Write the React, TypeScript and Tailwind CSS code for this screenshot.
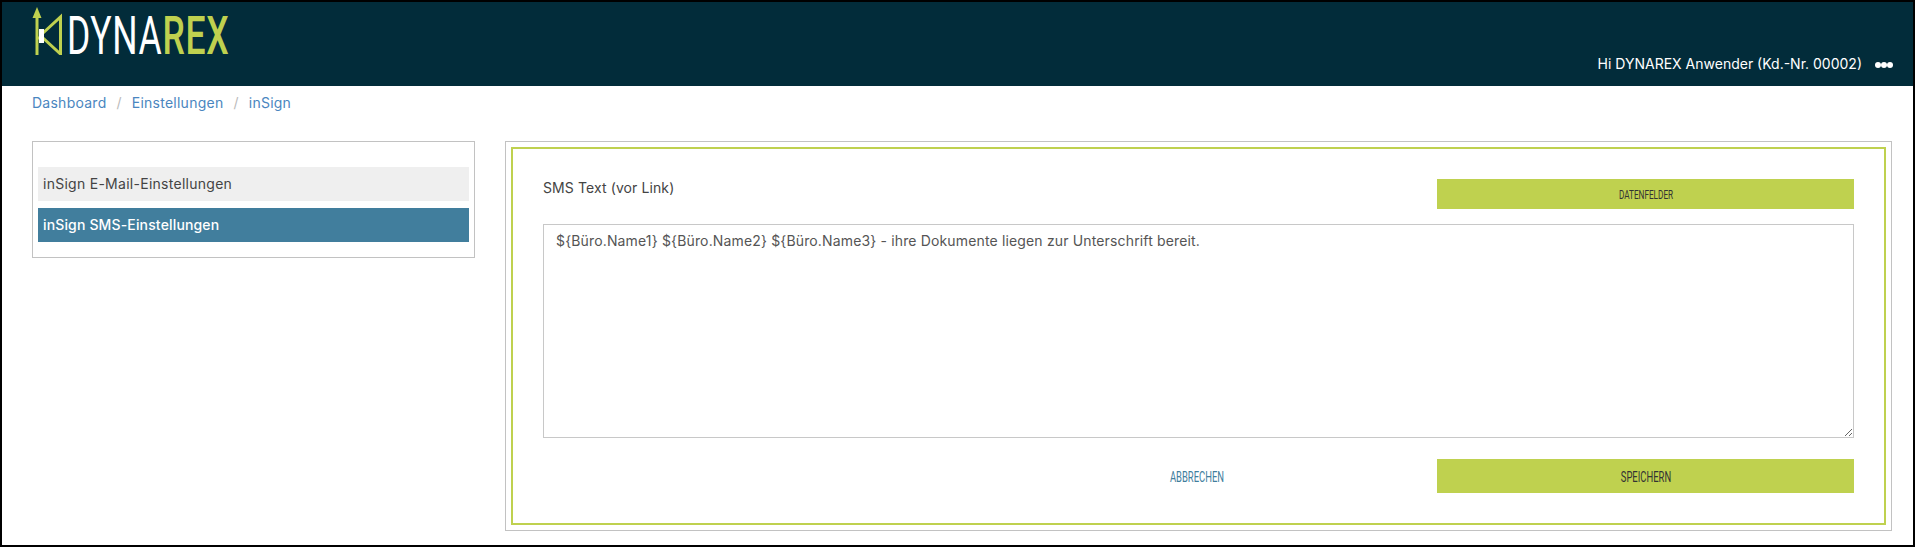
const sans = "font-['Inter','Liberation_Sans',sans-serif]";

function LogoMark() {
  return (
    <svg width="32" height="48" viewBox="0 0 32 48" className="shrink-0" fill="none">
      <path d="M5 48V8" stroke="#bfd14f" strokeWidth="3" />
      <path d="M5 0L9.5 11H0.5Z" fill="#bfd14f" />
      <path d="M5 31H10" stroke="#bfd14f" strokeWidth="3" />
      <path d="M11 26L28.5 10V47L11 31" stroke="#bfd14f" strokeWidth="3" />
      <rect x="7" y="22" width="5" height="14" fill="#fff" />
    </svg>
  );
}

function Logo() {
  return (
    <div className="flex h-[48px] items-end">
      <LogoMark />
      <div className="ml-[3px] flex w-[160px]">
        <div className="origin-left scale-x-[0.67] whitespace-nowrap font-['Roboto',sans-serif] text-[53px] leading-[38px] tracking-[1px] text-white">
          DYNA<span className="font-medium text-[#bfd14f]">REX</span>
        </div>
      </div>
    </div>
  );
}

function SideItem({ label, active }: { label: string; active?: boolean }) {
  return (
    <div
      className={
        active
          ? "flex h-[34px] items-center bg-[#417e9d] px-[5px] pb-[2px] text-[14px] font-medium tracking-[0.15px] text-white"
          : "flex h-[34px] items-center bg-[#efefef] px-[5px] pb-[2px] text-[14px] tracking-[0.27px] text-[#444]"
      }
    >
      {label}
    </div>
  );
}

function NarrowLabel({ children, size }: { children: string; size: string }) {
  return (
    <span className={`inline-block translate-y-[1px] scale-x-[0.63] whitespace-nowrap font-['Roboto',sans-serif] uppercase ${size}`}>
      {children}
    </span>
  );
}

export default function App() {
  return (
    <div className={`h-[547px] w-full overflow-hidden border-2 border-black bg-white ${sans}`}>
      <header className="flex h-[84px] items-start justify-between bg-[#022c3a] pl-[30px] pr-[20px]">
        <div className="pt-[5px]">
          <Logo />
        </div>
        <div className="mt-[51px] flex items-center gap-[13px] text-[14px] text-white">
          <span>Hi DYNAREX Anwender (Kd.-Nr. 00002)</span>
          <span className="mt-[2px] flex">
            <i className="size-[6px] rounded-full bg-white" />
            <i className="size-[6px] rounded-full bg-white" />
            <i className="size-[6px] rounded-full bg-white" />
          </span>
        </div>
      </header>

      <nav className="flex h-[32px] items-center gap-[10px] pl-[30px] text-[14px] tracking-[0.25px] text-[#4a86c0]">
        <span>Dashboard</span>
        <span className="text-[#bbb]">/</span>
        <span>Einstellungen</span>
        <span className="text-[#bbb]">/</span>
        <span>inSign</span>
      </nav>

      <div className="mt-[23px] flex items-start pl-[30px] pr-[21px]">
        <aside className="flex h-[117px] w-[443px] shrink-0 flex-col gap-[7px] border border-[#c2c2c2] px-[5px] pt-[25px]">
          <SideItem label="inSign E-Mail-Einstellungen" />
          <SideItem label="inSign SMS-Einstellungen" active />
        </aside>

        <main className="ml-[30px] h-[390px] flex-1 border border-[#c2c2c2] p-[5px]">
          <div className="h-full border-2 border-[#bfd14f] px-[30px] pt-[30px]">
            <div className="flex h-[30px] items-start justify-between">
              <span className="-mt-[2px] text-[14px] tracking-[0.1px] text-[#444]">SMS Text (vor Link)</span>
              <button className="flex h-[30px] w-[417px] items-center justify-center bg-[#bfd14f] text-[#333]">
                <NarrowLabel size="text-[13px]">Datenfelder</NarrowLabel>
              </button>
            </div>
            <textarea
              className="mt-[15px] block h-[214px] w-full border border-[#c8c8c8] px-[12px] py-[5px] text-[14px] tracking-[0.15px] text-[#555] outline-none"
              defaultValue="${Büro.Name1} ${Büro.Name2} ${Büro.Name3} - ihre Dokumente liegen zur Unterschrift bereit."
            />
            <div className="mt-[21px] flex items-center">
              <div className="flex flex-1 justify-end pr-[197px] text-[#417e9d]">
                <NarrowLabel size="text-[15px]">Abbrechen</NarrowLabel>
              </div>
              <button className="flex h-[34px] w-[417px] items-center justify-center bg-[#bfd14f] text-[#333]">
                <NarrowLabel size="text-[15px]">Speichern</NarrowLabel>
              </button>
            </div>
          </div>
        </main>
      </div>
    </div>
  );
}
